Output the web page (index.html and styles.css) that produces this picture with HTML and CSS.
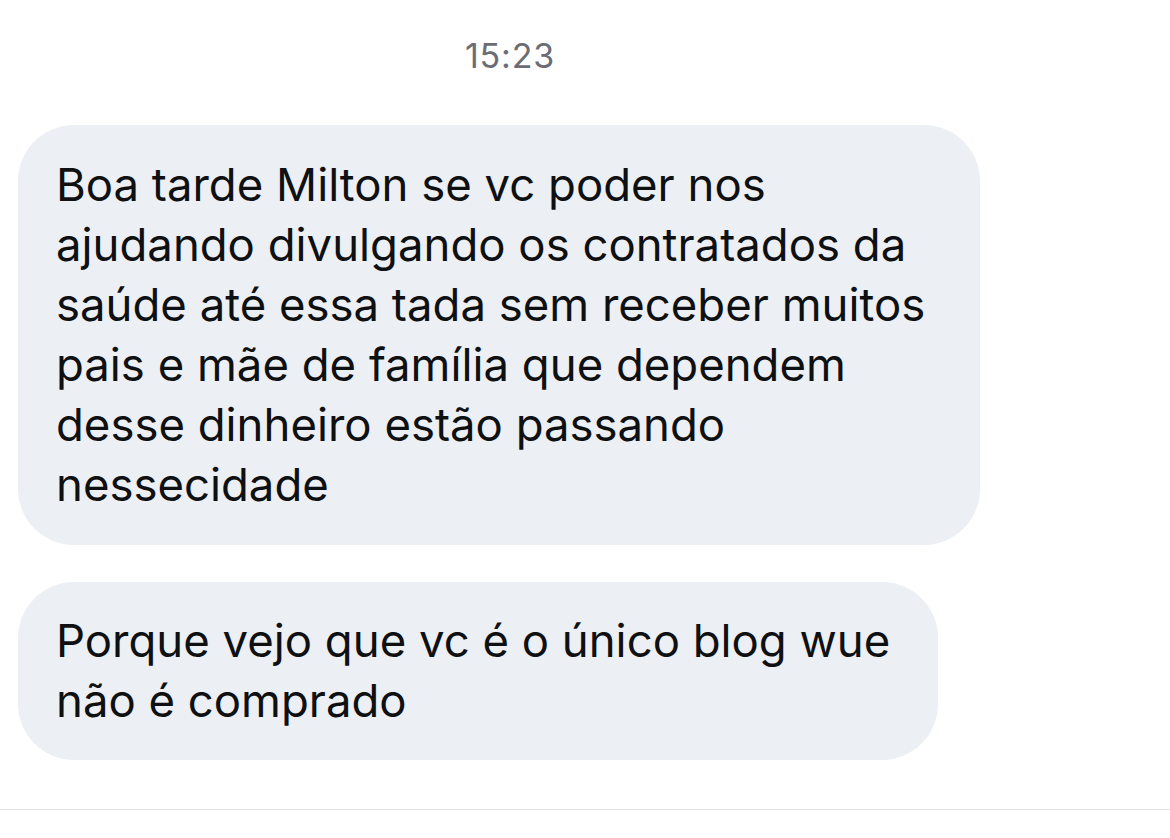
FILE: index.html
```html
<!DOCTYPE html>
<html lang="pt">
<head>
<meta charset="utf-8">
<link rel="stylesheet" href="styles.css">
</head>
<body>
<div class="chat">
  <div class="time">15:23</div>
  <div class="bubble b1">Boa tarde Milton se vc poder nos<br>ajudando divulgando os contratados da<br>saúde até essa tada sem receber muitos<br>pais e mãe de família que dependem<br>desse dinheiro estão passando<br>nessecidade</div>
  <div class="bubble b2">Porque vejo que vc é o único blog wue<br>não é comprado</div>
  <div class="divider"></div>
</div>
</body>
</html>
```
FILE: styles.css
```css
html, body {
  margin: 0;
  padding: 0;
  background: #ffffff;
}
.chat {
  display: flex;
  flex-direction: column;
  align-items: flex-start;
  padding-top: 36px;
  font-family: Inter, "Noto Sans", sans-serif;
}
.time {
  width: 1020px;
  text-align: center;
  font-size: 34px;
  letter-spacing: 0.8px;
  line-height: 40px;
  color: #6b6d75;
  margin-bottom: 49px;
}
.bubble {
  box-sizing: border-box;
  margin-left: 18px;
  background: #eceff3;
  color: #0f1012;
  font-size: 45.5px;
  line-height: 60px;
  padding: 30px 20px 30px 38px;
  border-radius: 56px;
  white-space: nowrap;
}
.b1 {
  width: 962px;
}
.b2 {
  width: 920px;
  margin-top: 37px;
  padding-top: 29px;
  padding-bottom: 29px;
}
.divider {
  align-self: stretch;
  height: 1px;
  background: #e2e2e5;
  margin-top: 49px;
}
```
